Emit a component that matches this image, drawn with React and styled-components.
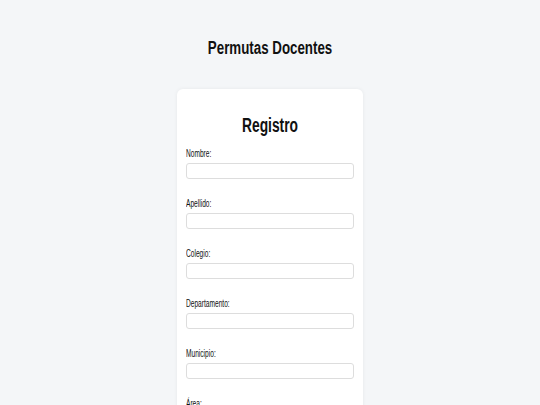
import React from 'react'
import styled, { createGlobalStyle } from 'styled-components'

const GlobalStyle = createGlobalStyle`
  body {
    margin: 0;
    background: #f4f6f8;
    font-family: "Liberation Sans", Arial, sans-serif;
    color: #111;
  }
`

const fields = ['Nombre', 'Apellido', 'Colegio', 'Departamento', 'Municipio', 'Área']

function App() {
  return (
    <>
      <GlobalStyle />
      <Page>
        <Header>Permutas Docentes</Header>
        <Card>
          <Title>Registro</Title>
          {fields.map(f => (
            <Field key={f}>
              <Label>{f}:</Label>
              <Input type="text" />
            </Field>
          ))}
        </Card>
      </Page>
    </>
  )
}

export default App

const Page = styled.div`
  display: flex;
  flex-direction: column;
  align-items: center;
  height: 405px;
  overflow: hidden;
`

// the reference type is a narrow grotesque: squeeze Liberation Sans to match
const Header = styled.h1`
  margin: 37px 0 0;
  font-size: 18px;
  font-weight: bold;
  line-height: 22px;
  transform: scaleX(0.74);
`

const Card = styled.div`
  margin-top: 30px;
  width: 168px;
  padding: 18px 9px 20px;
  background: #fff;
  border-radius: 6px;
  box-shadow: 0 0 4px rgba(0, 0, 0, 0.06);
`

const Title = styled.h2`
  margin: 6px 0 11px;
  text-align: center;
  font-size: 20px;
  font-weight: bold;
  line-height: 24px;
  transform: scaleX(0.69);
`

const Field = styled.div`
  display: flex;
  flex-direction: column;
  margin-bottom: 19px;
`

const Label = styled.label`
  display: block;
  font-size: 10px;
  line-height: 12px;
  margin-bottom: 3px;
  transform: scaleX(0.66);
  transform-origin: left center;
  white-space: nowrap;
`

const Input = styled.input`
  box-sizing: border-box;
  width: 100%;
  height: 16px;
  margin: 0;
  border: 1px solid #ddd;
  border-radius: 3px;
  background: #fff;
`
